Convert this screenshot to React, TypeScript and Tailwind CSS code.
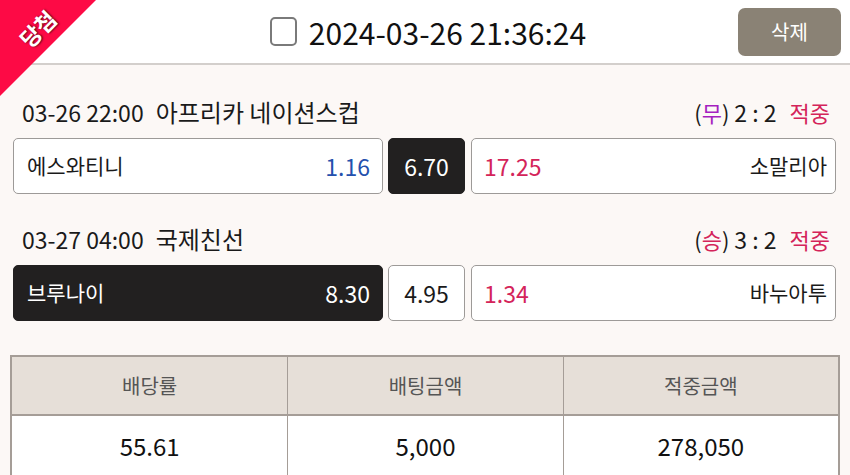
import React from "react";

const FONT = { fontFamily: '"Noto Sans CJK KR", "Noto Sans", sans-serif' };

type Match = {
  time: string;
  league: string;
  pick: string;
  pickColor: string;
  score: string;
  home: string;
  homeOdds: string;
  draw: string;
  away: string;
  awayOdds: string;
  selected: "home" | "draw" | "away";
};

const MATCHES: Match[] = [
  {
    time: "03-26 22:00",
    league: "아프리카 네이션스컵",
    pick: "무",
    pickColor: "text-[#a51fc0]",
    score: "2 : 2",
    home: "에스와티니",
    homeOdds: "1.16",
    draw: "6.70",
    away: "소말리아",
    awayOdds: "17.25",
    selected: "draw",
  },
  {
    time: "03-27 04:00",
    league: "국제친선",
    pick: "승",
    pickColor: "text-[#d4245a]",
    score: "3 : 2",
    home: "브루나이",
    homeOdds: "8.30",
    draw: "4.95",
    away: "바누아투",
    awayOdds: "1.34",
    selected: "home",
  },
];

function MatchRow({ m }: { m: Match }) {
  const on = "bg-[#222020] border-[#222020] text-white";
  const off = "bg-white border-[#9d9a98] text-[#1a1a1a]";
  return (
    <div className="mb-[24px]">
      <div className="flex h-[42px] items-center justify-between pl-[9px] pr-[6px] text-[22px] text-[#1a1a1a]">
        <span>
          <span className="text-[23px]">{m.time}</span>
          <span className="ml-[12px] text-[24px]">{m.league}</span>
        </span>
        <span>
          (<span className={m.pickColor}>{m.pick}</span>) <span className="text-[23px]">{m.score}</span>
          <span className="ml-[13px] text-[#d4245a]">적중</span>
        </span>
      </div>
      <div className="mt-[5px] flex gap-[5px] text-[21px]">
        <div
          className={`flex h-[56px] flex-1 items-center justify-between rounded-[5px] border pl-[13px] pr-[12px] ${
            m.selected === "home" ? on : off
          }`}
        >
          <span>{m.home}</span>
          <span className={`text-[23px] ${m.selected === "home" ? "" : "text-[#2450ad]"}`}>
            {m.homeOdds}
          </span>
        </div>
        <div
          className={`flex h-[56px] w-[77px] items-center justify-center rounded-[5px] border text-[23px] ${
            m.selected === "draw" ? on : off
          }`}
        >
          {m.draw}
        </div>
        <div
          className={`ml-[1px] flex h-[56px] flex-1 items-center justify-between rounded-[5px] border pl-[12px] pr-[8px] ${
            m.selected === "away" ? on : off
          }`}
        >
          <span className={`text-[23px] ${m.selected === "away" ? "" : "text-[#d4245a]"}`}>
            {m.awayOdds}
          </span>
          <span>{m.away}</span>
        </div>
      </div>
    </div>
  );
}

export default function App() {
  return (
    <div className="relative h-[475px] w-[850px] overflow-hidden bg-[#fcf8f6]" style={FONT}>
      {/* 당첨 리본 */}
      <div className="absolute left-0 top-0 z-10 h-[96px] w-[96px] bg-[#fd0a45] [clip-path:polygon(0_0,100%_0,0_100%)]">
        <span className="absolute left-[17px] top-[12px] -rotate-45 text-[22px] font-bold text-white [text-shadow:1px_1px_2px_rgba(0,0,0,0.7)]">
          당첨
        </span>
      </div>

      <div className="grid h-[65px] grid-cols-[1fr_auto_1fr] items-center border-b-2 border-[#d3cfcc] bg-white">
        <div />
        <div className="flex items-center gap-[12px] pl-[6px]">
          <div className="h-[29px] w-[27px] rounded-[5px] border-2 border-[#7a7a7a] bg-white" />
          <span className="text-[30px] leading-none text-[#111]">2024-03-26 21:36:24</span>
        </div>
        <div className="flex justify-end pr-[9px]">
          <button className="h-[48px] w-[103px] rounded-[7px] bg-[#8a8275] text-[20px] text-white">
            삭제
          </button>
        </div>
      </div>

      <div className="pl-[13px] pr-[14px] pt-[26px]">
        {MATCHES.map((m, i) => (
          <MatchRow key={i} m={m} />
        ))}
      </div>

      <div className="mt-[34px] px-[10px]">
        <div className="grid grid-cols-3 border-2 border-b-0 border-[#a59d97]">
          {["배당률", "배팅금액", "적중금액"].map((h, i) => (
            <div
              key={h}
              className={`flex h-[59px] items-center justify-center border-b-2 border-[#a59d97] bg-[#e6dfd8] text-[20px] text-[#555] ${
                i > 0 ? "border-l border-l-[#a59d97]" : ""
              }`}
            >
              {h}
            </div>
          ))}
          {["55.61", "5,000", "278,050"].map((v, i) => (
            <div
              key={v}
              className={`flex h-[60px] items-center justify-center bg-white text-[24px] text-[#111] ${
                i > 0 ? "border-l border-l-[#a59d97]" : ""
              }`}
            >
              {v}
            </div>
          ))}
        </div>
      </div>
    </div>
  );
}
